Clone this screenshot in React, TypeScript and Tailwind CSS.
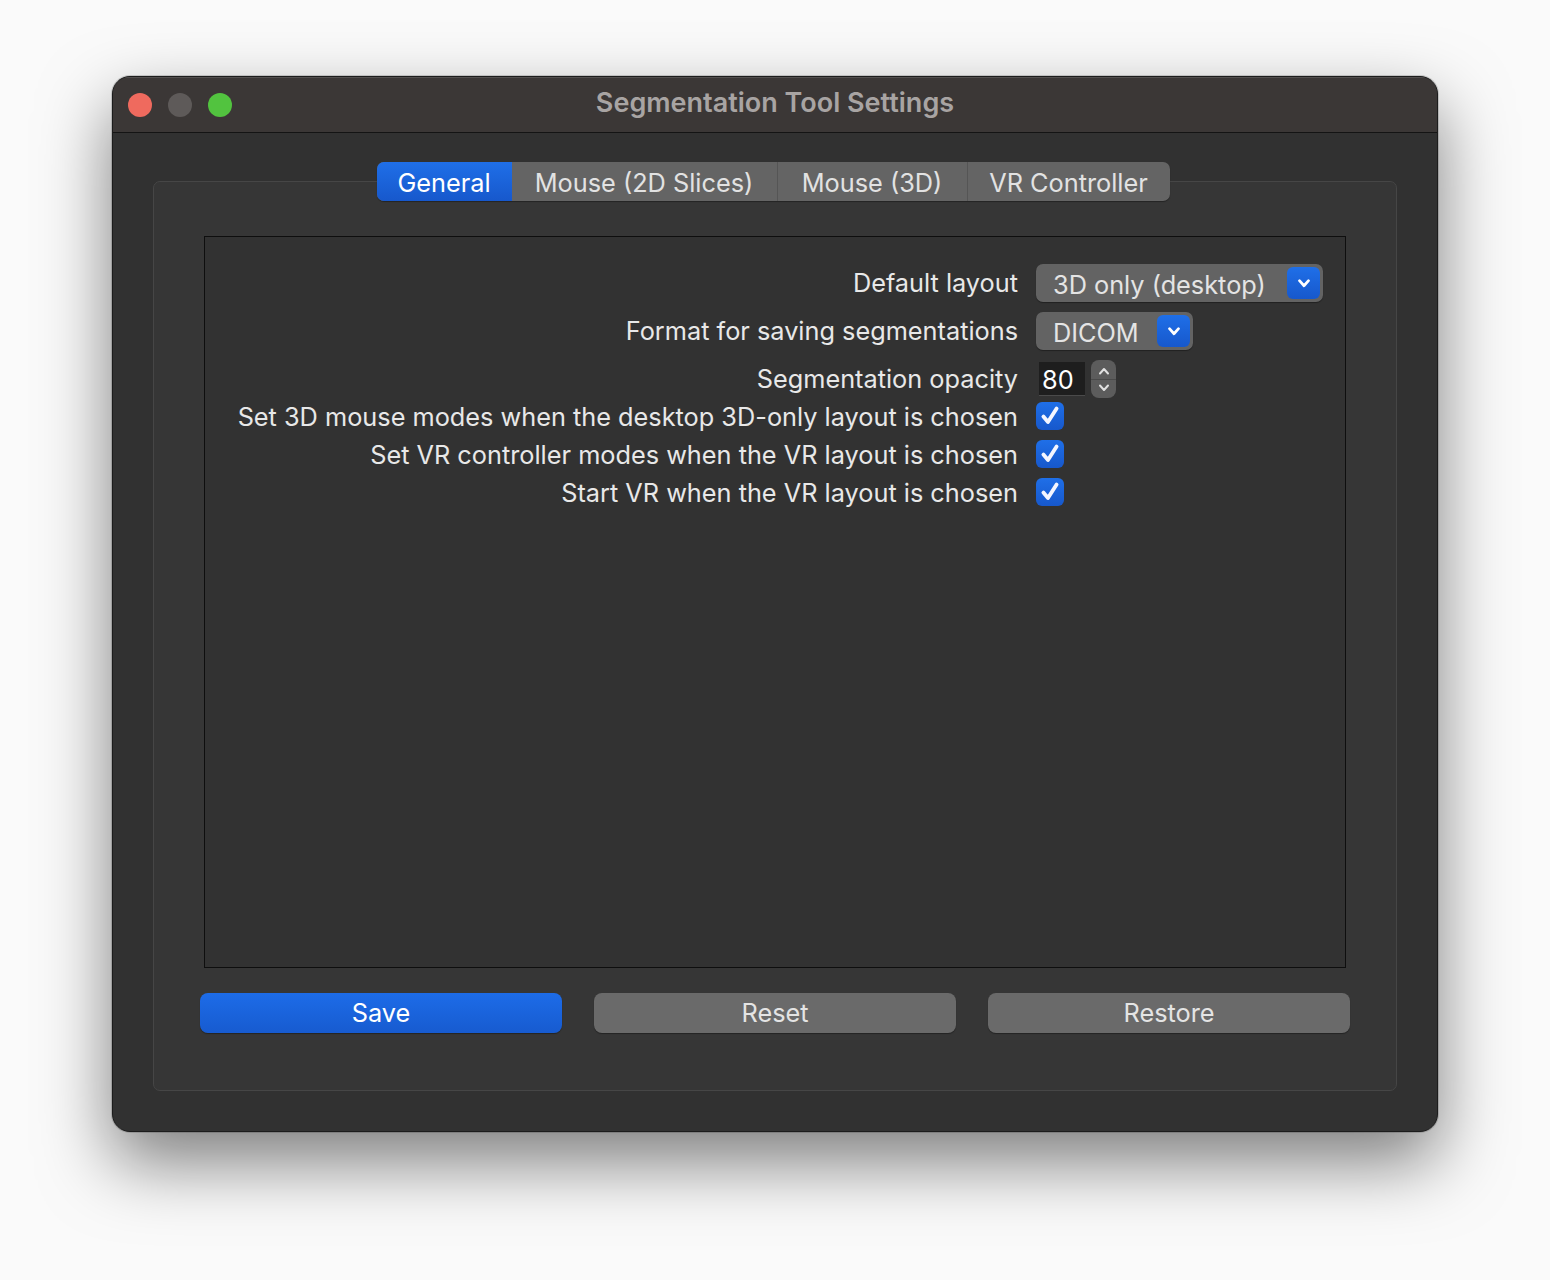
import React from "react";

const font = { fontFamily: 'Inter, "Noto Sans", "Liberation Sans", sans-serif' };

function Chevron({ up = false, className = "", sw = 2 }: { up?: boolean; className?: string; sw?: number }) {
  return (
    <svg viewBox="0 0 12 8" className={className} fill="none" stroke="currentColor" strokeWidth={sw} strokeLinecap="round" strokeLinejoin="round">
      {up ? <path d="M2 6.5 L6 2 L10 6.5" /> : <path d="M2 1.5 L6 6 L10 1.5" />}
    </svg>
  );
}

function Combo({ label, width }: { label: string; width: string }) {
  return (
    <div className={`flex h-[38px] items-center justify-between rounded-[7px] bg-[#636363] pl-[17px] pr-[3px] shadow-[0_1px_1px_rgba(0,0,0,0.35)] ${width}`}>
      <span className="pt-[4px] text-[25.3px] text-[#e4e4e4]">{label}</span>
      <div className="flex h-[32px] w-[33px] items-center justify-center rounded-[6px] bg-gradient-to-b from-[#1f6fe8] to-[#1758cc] text-white">
        <Chevron className="h-[9px] w-[14px]" sw={2.4} />
      </div>
    </div>
  );
}

function Check() {
  return (
    <div className="flex h-[28px] w-[28px] items-center justify-center rounded-[6px] bg-gradient-to-b from-[#1f6fe8] to-[#1758cc]">
      <svg viewBox="0 0 20 20" className="h-[24px] w-[24px]" fill="none" stroke="#f4f6ff" strokeWidth={3.2} strokeLinecap="round" strokeLinejoin="round">
        <path d="M4.5 10.5 L8.3 15 L15.5 3.8" />
      </svg>
    </div>
  );
}

function Row({ label, children, h = "h-[38px]" }: { label: string; children: React.ReactNode; h?: string }) {
  return (
    <div className={`grid grid-cols-[813px_1fr] items-center gap-x-[18px] ${h}`}>
      <div className="text-right text-[25.3px] text-[#e8e8e8]">{label}</div>
      <div className="flex items-center">{children}</div>
    </div>
  );
}

export default function App() {
  const tabs = ["General", "Mouse (2D Slices)", "Mouse (3D)", "VR Controller"];
  const tabW = ["w-[135px]", "w-[265px]", "w-[190px]", "w-[203px]"];
  return (
    <div className="flex h-[1280px] w-[1550px] justify-center bg-[#fafafa] pt-[76px]" style={font}>
      <div className="flex h-[1056px] w-[1326px] flex-col overflow-hidden rounded-[18px] border border-[#1c1c1c] bg-[#313131] shadow-[0_30px_70px_rgba(0,0,0,0.5),0_0_0_1px_rgba(0,0,0,0.15)]">
        {/* title bar */}
        <div className="relative flex h-[56px] shrink-0 items-center border-b border-[#141414] bg-[#3b3736] shadow-[inset_0_1px_0_rgba(255,255,255,0.12)]">
          <div className="flex items-center gap-[16px] pl-[15px]">
            <div className="h-[24px] w-[24px] rounded-full bg-[#ef6a5e]" />
            <div className="h-[24px] w-[24px] rounded-full bg-[#5e5a59]" />
            <div className="h-[24px] w-[24px] rounded-full bg-[#52c33f]" />
          </div>
          <div className="absolute inset-0 flex items-center justify-center pb-[2px] text-[27px] font-semibold text-[#a8a4a3]">
            Segmentation Tool Settings
          </div>
        </div>
        {/* body */}
        <div className="flex flex-1 flex-col px-[40px] pb-[40px] pt-[29px]">
          <div className="relative z-10 mb-[-20px] flex justify-center pr-[4px]">
            <div className="flex h-[39px] overflow-hidden rounded-[7px] bg-[#646464] shadow-[0_1px_1px_rgba(0,0,0,0.35)]">
              {tabs.map((t, i) => (
                <div
                  key={t}
                  className={`flex items-center justify-center pt-[2px] text-[25.3px] ${tabW[i]} ${
                    i === 0
                      ? "bg-gradient-to-b from-[#1f6fe8] to-[#1758cc] text-white"
                      : "text-[#e2e2e2]"
                  } ${i > 1 ? "border-l border-[#555555]" : ""}`}
                >
                  {t}
                </div>
              ))}
            </div>
          </div>
          <div className="flex flex-1 flex-col rounded-[7px] border border-[#464646] bg-[#363636] px-[46px] pb-[57px] pt-[54px]">
            <div className="mx-[4px] flex flex-1 flex-col border border-[#0e0e0e] bg-[#323232] pt-[27px]">
              <div className="flex flex-col gap-[10px]">
                <Row label="Default layout">
                  <Combo label="3D only (desktop)" width="w-[287px]" />
                </Row>
                <Row label="Format for saving segmentations">
                  <Combo label="DICOM" width="w-[157px]" />
                </Row>
              </div>
              <div className="mt-[10px]">
                <Row label="Segmentation opacity" h="h-[36px]">
                  <div className="ml-[3px] flex h-[34px] w-[46px] items-center border-b border-[#4a4a4a] bg-[#1e1e1e] pl-[3px] pt-[2px] text-[25.3px] text-white">
                    80
                  </div>
                  <div className="ml-[6px] flex h-[38px] w-[25px] flex-col items-center justify-center rounded-[8px] bg-[#5c5c5c] text-[#e0e0e0]">
                    <Chevron up className="h-[8px] w-[12px]" />
                    <div className="my-[4px] h-px w-full bg-[#4a4a4a]" />
                    <Chevron className="h-[8px] w-[12px]" />
                  </div>
                </Row>
              </div>
              <div className="mt-[2px]">
                <Row label="Set 3D mouse modes when the desktop 3D-only layout is chosen">
                  <div className="-mt-[2px]"><Check /></div>
                </Row>
                <Row label="Set VR controller modes when the VR layout is chosen">
                  <div className="-mt-[2px]"><Check /></div>
                </Row>
                <Row label="Start VR when the VR layout is chosen">
                  <div className="-mt-[2px]"><Check /></div>
                </Row>
              </div>
            </div>
            <div className="mt-[25px] grid grid-cols-3 gap-[32px]">
              <button className="h-[40px] rounded-[8px] bg-gradient-to-b from-[#1d6ce8] to-[#175bd0] text-[25.3px] text-white shadow-[0_1px_1px_rgba(0,0,0,0.35)]">
                Save
              </button>
              <button className="h-[40px] rounded-[8px] bg-[#6a6a6a] text-[25.3px] text-[#e4e4e4] shadow-[0_1px_1px_rgba(0,0,0,0.35)]">
                Reset
              </button>
              <button className="h-[40px] rounded-[8px] bg-[#6a6a6a] text-[25.3px] text-[#e4e4e4] shadow-[0_1px_1px_rgba(0,0,0,0.35)]">
                Restore
              </button>
            </div>
          </div>
        </div>
      </div>
    </div>
  );
}
